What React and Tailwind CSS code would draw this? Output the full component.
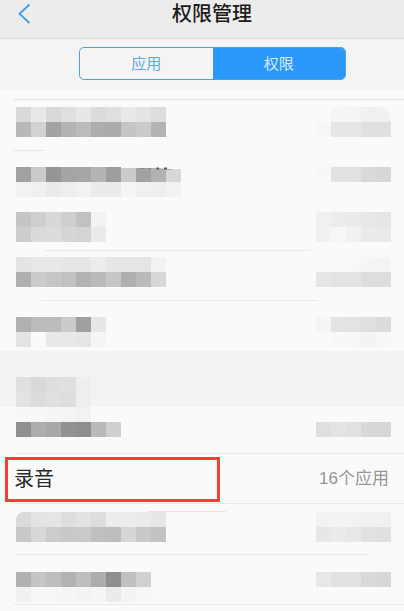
import { useState } from 'react'
import clsx from 'clsx'

// One string per line of blocks, one hex grey level per block ('--' = empty)
const ROWS = [
  {
    id: 'r1',
    height: 'h-[51px]',
    pad: 'pt-[7px]',
    rule: 'ml-[13px] w-8',
    name: ['d9 e8 d9 df e7 db df e9 e4 dd', 'b8 d2 a3 b3 bb ad ab c5 cb b4'],
    count: ['-- f5 f4 f0 f1', 'f7 e7 e7 e0 e0'],
    countShape: 'rounded-tr-xl',
  },
  {
    id: 'r2',
    pad: 'pt-4',
    rule: 'invisible',
    name: ['a2 ca 96 a5 a6 b4 9e cb a2 b2 d8', 'f2 f0 ea ee f2 eb eb f5 f0 ee f2'],
    count: ['f8 e2 e1 da d8', '-- -- -- -- --'],
    traces: true,
  },
  {
    id: 'r3',
    pad: 'pt-[11px]',
    rule: 'ml-[45px] mr-[94px]',
    name: ['c5 cf d8 ce c2 f3', 'cd da dc d6 d4 ea'],
    count: ['f0 ec eb e8 e6', 'f1 f6 f1 ea ea'],
  },
  {
    id: 'r4',
    pad: 'pt-[6px]',
    rule: 'ml-[41px] mr-[86px]',
    name: ['e4 e8 e8 e6 e6 ec e6 e6 e5 f2', 'af cb c6 c1 b2 ba c6 af ba d8'],
    count: ['-- -- f8 f5 f4', 'e6 e3 e3 dd dd'],
  },
  {
    id: 'r5',
    pad: 'pt-4',
    rule: 'invisible',
    name: ['b0 bb bc ca a0 e6', 'e3 fa e8 e8 e6 f5'],
    count: ['f5 e4 e3 df dc', '-- f8 f7 f3 f7'],
  },
]

const PRIVACY_ROWS = [
  {
    id: 'p1',
    height: 'h-[47px]',
    pad: 'pt-0',
    rule: 'ml-[14px]',
    name: ['f8 f7 f5 f4 f2 -- --', '90 ad a8 92 8e b9 cf'],
    count: ['-- -- -- -- --', 'df e4 e1 d8 d7'],
  },
  { id: 'record', label: '录音', value: '16个应用', rule: 'ml-[14px]' },
  {
    id: 'p2',
    height: 'h-[51px]',
    pad: 'pt-2',
    rule: 'ml-[14px] mr-[35px]',
    name: ['da e3 e5 dd e2 dd ec ec ea e6', 'c8 d8 cc c9 ca bf bd d6 c9 c2'],
    nameShape: 'rounded-tl-lg',
    count: ['f3 f3 f3 f0 f0', 'e7 eb e8 e1 e0'],
    smear: true,
  },
  {
    id: 'p3',
    pad: 'pt-[17px]',
    rule: 'ml-[14px]',
    name: ['b1 c5 be b2 be ad 8f c0 d0', 'f1 f6 f6 f5 f3 f5 eb f3 f6'],
    count: ['e8 e2 e1 d9 d8', '-- -- -- -- --'],
  },
]

function Mosaic({ lines, className }) {
  return (
    <div aria-hidden="true" className={clsx('overflow-hidden', className)}>
      {lines.map((line, y) => (
        <div key={y} className="flex">
          {line.split(' ').map((g, x) => (
            <span
              key={x}
              className="w-[15px] h-[15px]"
              style={g === '--' ? undefined : { backgroundColor: `#${g}${g}${g}` }}
            />
          ))}
        </div>
      ))}
    </div>
  )
}

function TextTraces() {
  return (
    <svg
      aria-hidden="true"
      className="absolute left-[121px] top-4"
      width="60"
      height="4"
      viewBox="0 0 60 4"
    >
      <path d="M0 0H60V2H46L38 1H14L0 1Z" fill="#fafafa" />
      <path d="M19 1.5h4M27 1.5h3" stroke="#888" strokeWidth="1" />
      <path d="M35.5 1.5h2.5M43 1.5h3" stroke="#555" strokeWidth="2" />
      <path d="M38 2.5h5M46 2.5h5" stroke="#aaa" strokeWidth="1" />
    </svg>
  )
}

function PermissionRow({ row }) {
  return (
    <li className={clsx('relative flex flex-col', row.height || 'h-[50px]')}>
      {row.label ? (
        <div className="flex flex-1 items-center justify-between pl-[14px] pr-[15px]">
          <span className="text-[20px] leading-6 text-[#2b2b2b]">{row.label}</span>
          <span className="text-[17px] leading-6 text-[#959595]">{row.value}</span>
          <div className="absolute left-[5px] top-[3px] w-[215px] h-[45px] border-3 border-[#fb3a3a]" />
        </div>
      ) : (
        <div className={clsx('flex flex-1 items-start justify-between pl-4 pr-[13px]', row.pad)}>
          <Mosaic lines={row.name} className={row.nameShape} />
          <Mosaic lines={row.count} className={row.countShape} />
        </div>
      )}
      {row.traces && <TextTraces />}
      {row.smear && (
        <div className="absolute left-[147px] top-[7px] w-[79px] h-px bg-[#f9dcdc]" />
      )}
      <div className={clsx('h-px bg-[#e9e9e9]', row.rule)} />
    </li>
  )
}

export default function App() {
  const [tab, setTab] = useState('permission')

  return (
    <div className="min-h-screen bg-[#fafafa] font-['Liberation_Sans','Noto_Sans_CJK_SC',sans-serif]">
      <header className="grid h-[39px] grid-cols-[48px_1fr_28px] items-start border-b border-[#dcdcdc] bg-[#ececec]">
        <button type="button" aria-label="返回" className="flex pl-[17px] pt-[3px]">
          <svg width="15" height="22" viewBox="0 0 15 22" fill="none">
            <path d="M12.5 1.5L2.5 10.8L12.5 20" stroke="#3f9de6" strokeWidth="1.8" />
          </svg>
        </button>
        <h1 className="text-center text-[20px] font-medium leading-7 text-[#1c1c1c]">权限管理</h1>
      </header>

      <div className="flex h-[50px] items-start bg-[#f4f4f4] pl-[79px] pr-[58px] pt-2">
        <div
          role="tablist"
          className="grid h-[33px] flex-1 grid-cols-2 overflow-hidden rounded-[5px] border border-[#4ba3e3] text-[15px] leading-6"
        >
          <button
            type="button"
            role="tab"
            aria-selected={tab === 'app'}
            onClick={() => setTab('app')}
            className={tab === 'app' ? 'bg-[#2b98fb] text-[#d9ecfd]' : 'text-[#5aa9e0]'}
          >
            应用
          </button>
          <button
            type="button"
            role="tab"
            aria-selected={tab === 'permission'}
            onClick={() => setTab('permission')}
            className={tab === 'permission' ? 'bg-[#2b98fb] text-[#d9ecfd]' : 'text-[#5aa9e0]'}
          >
            权限
          </button>
        </div>
      </div>

      <div className="pt-[10px]">
        <div className="ml-[14px] h-px bg-[#e2e2e2]" />
        <ul>
          {ROWS.map((row) => (
            <PermissionRow key={row.id} row={row} />
          ))}
        </ul>
      </div>

      <div className="flex h-14 items-end bg-[#f3f3f3] pl-4">
        <Mosaic lines={['e0 d9 de e0 ee', 'e3 dc df dd ee']} />
      </div>

      <ul>
        {PRIVACY_ROWS.map((row) => (
          <PermissionRow key={row.id} row={row} />
        ))}
      </ul>
    </div>
  )
}
